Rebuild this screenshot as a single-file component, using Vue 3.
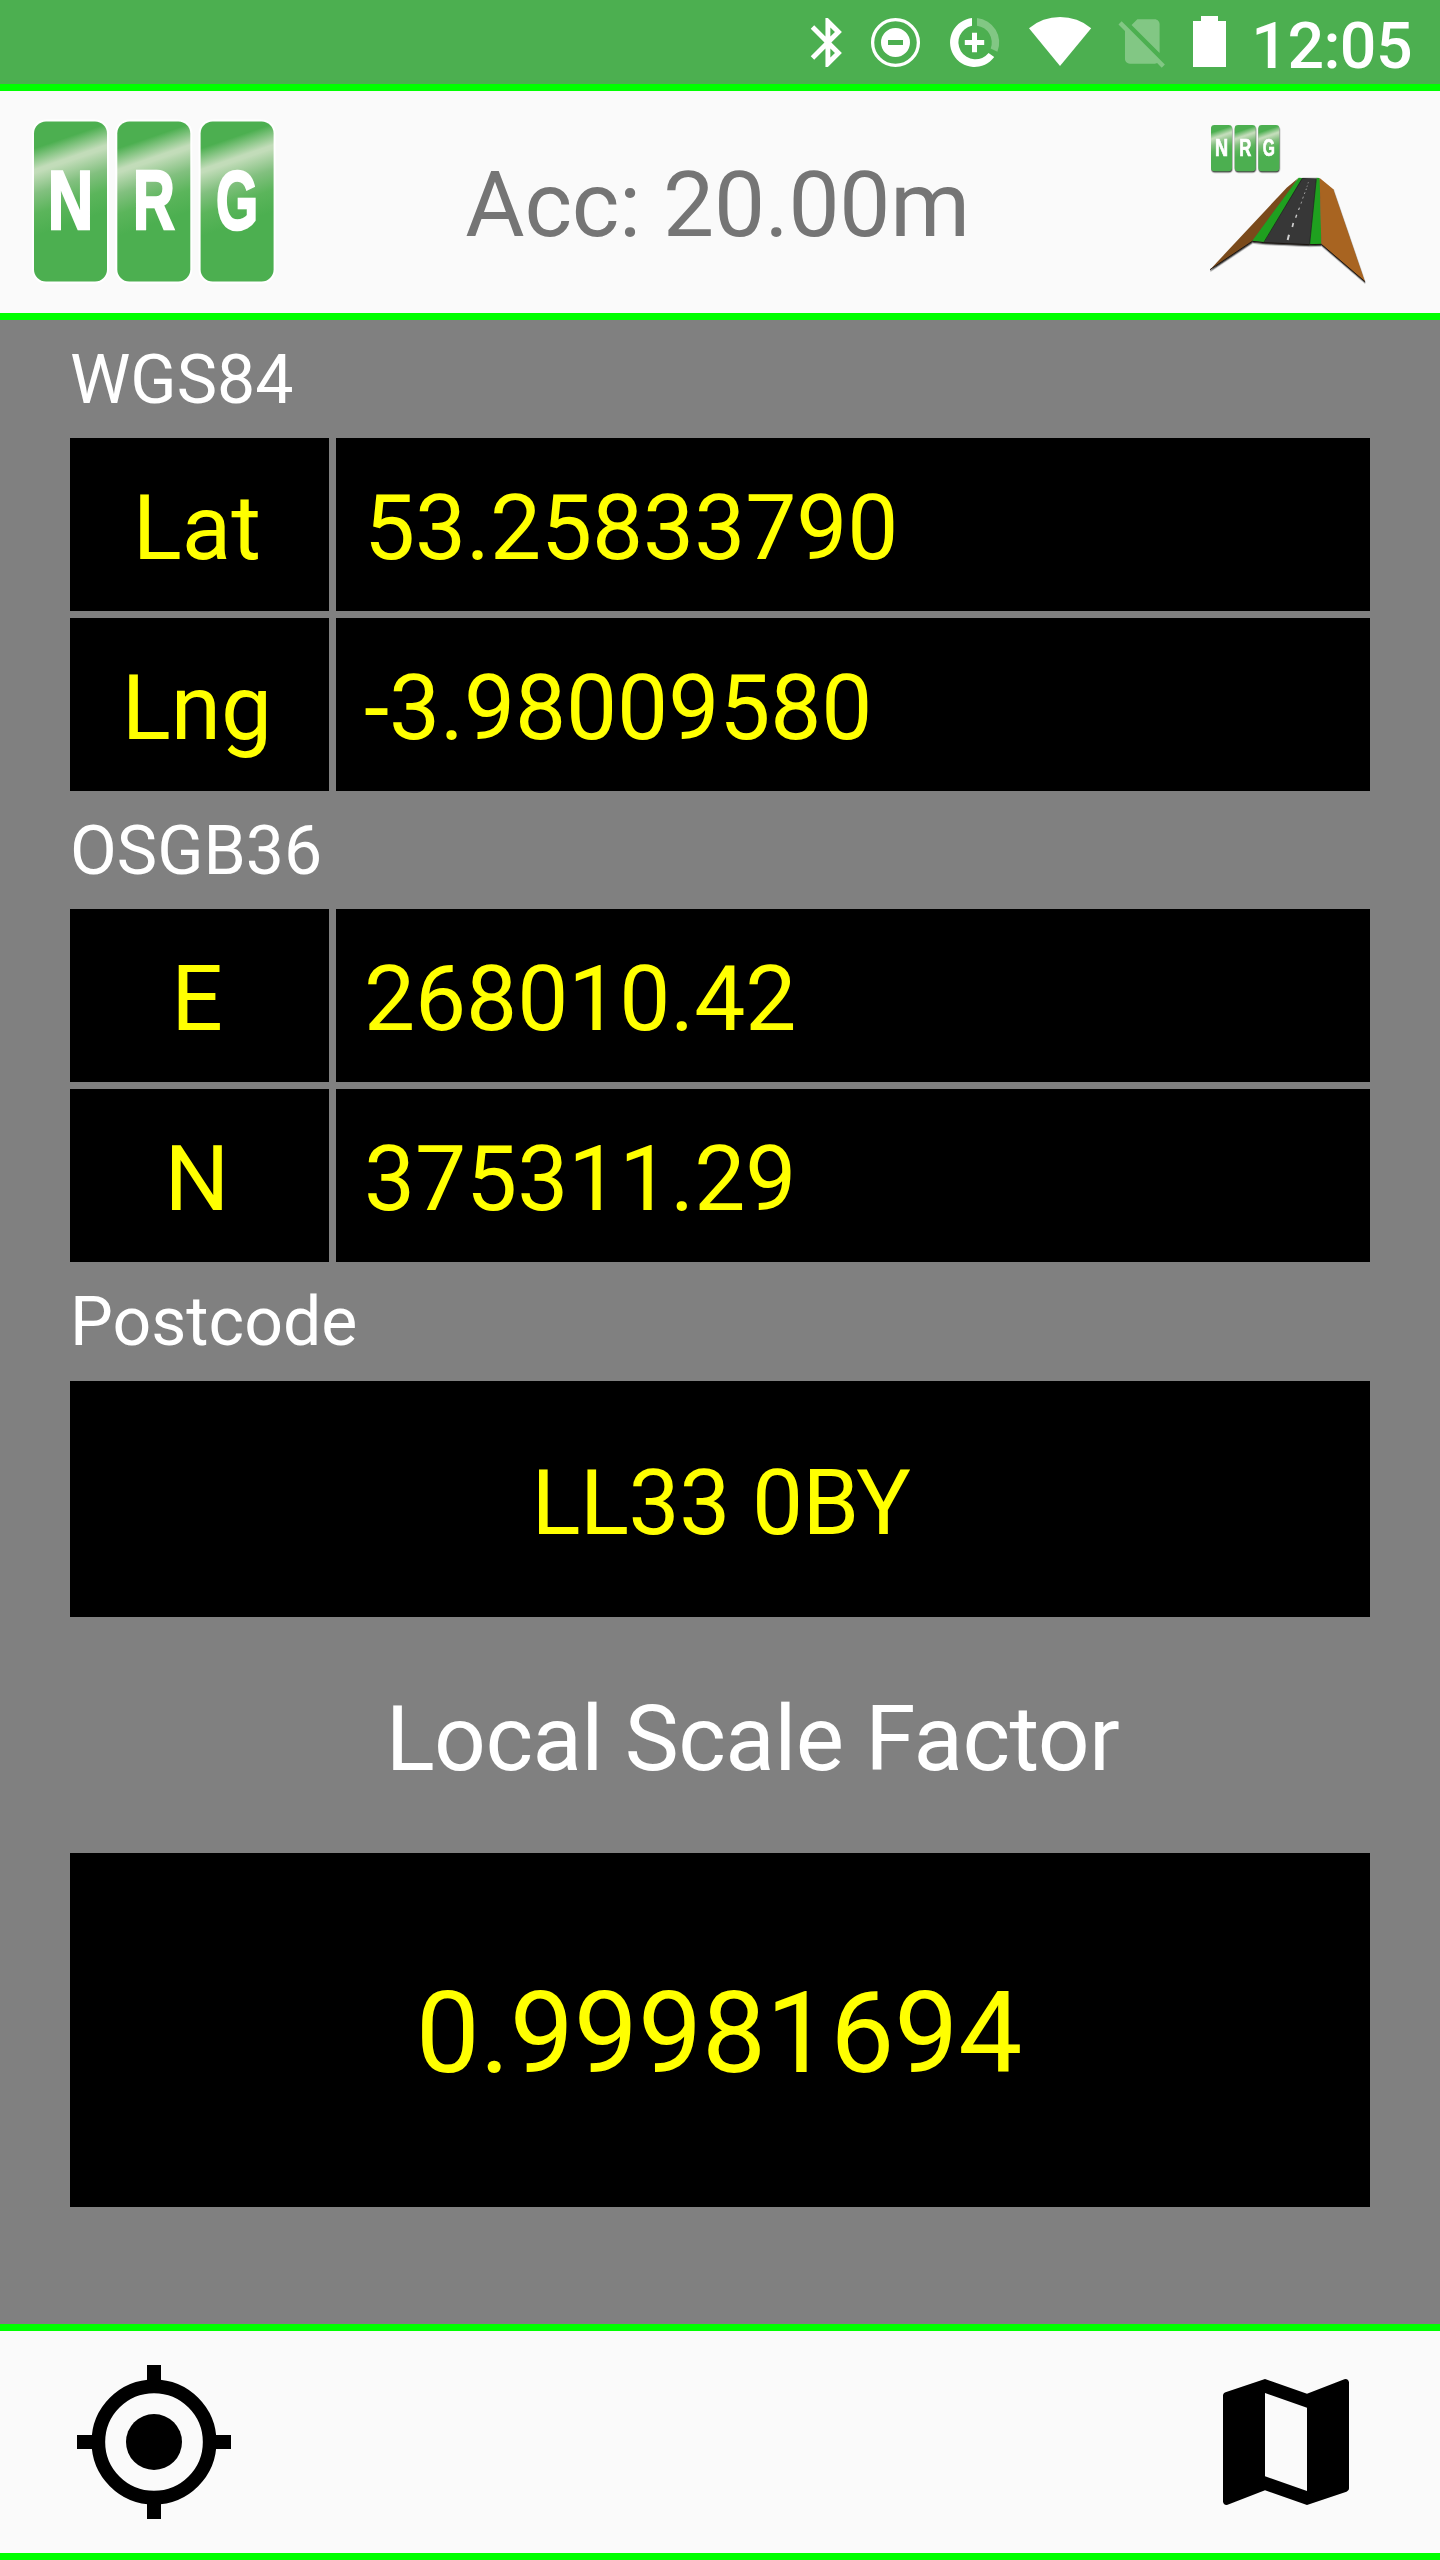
<script setup>
const systems = [
  { name: 'WGS84', rows: [['Lat', '53.25833790'], ['Lng', '-3.98009580']] },
  { name: 'OSGB36', rows: [['E', '268010.42'], ['N', '375311.29']] },
]
// each logo tile: letter and its horizontal condensing factor
const tiles = [
  { t: 'N', s: 0.75 },
  { t: 'R', s: 0.69 },
  { t: 'G', s: 0.645 },
]
</script>

<template>
  <div class="screen">
    <div class="status">
      <svg class="icons" width="440" height="84" viewBox="790 0 440 84" fill="#fff">
        <!-- bluetooth -->
        <path transform="translate(798.5 13.1) scale(2.45)" d="M17.71 7.71L12 2h-1v7.59L6.41 5 5 6.41 10.59 12 5 17.59 6.41 19 11 14.41V22h1l5.71-5.71-4.3-4.29 4.3-4.29zM13 5.83l1.88 1.88L13 9.59V5.83zm1.88 10.46L13 18.17v-3.76l1.88 1.88z" />
        <!-- do not disturb -->
        <circle cx="895.5" cy="42.5" r="22.9" fill="none" stroke="#fff" stroke-width="3.3" />
        <path fill-rule="evenodd" d="M895.5 28a14.5 14.5 0 1 1 0 29a14.5 14.5 0 1 1 0-29zM888 40v5h15v-5z" />
        <!-- data saver -->
        <g transform="translate(974.5 42.5)">
          <path d="M-2.5-24.4A24.5 24.5 0 1 0 19.7 14.6L14.1 10.6A17 17 0 1 1-2.5-16.8Z" />
          <path opacity=".3" d="M2.5-24.4A24.5 24.5 0 0 1 22.9 9.2L16.2 6A17 17 0 0 0 2.5-16.8Z" />
          <path d="M-2.5-9.7h5v7.2h7.2v5h-7.2v7.2h-5v-7.2h-7.2v-5h7.2z" />
        </g>
        <!-- wifi -->
        <path d="M1060 66L1029 28.2A48.6 48.6 0 0 1 1091.2 28.2Z" />
        <!-- no sim -->
        <path opacity=".3" transform="translate(1112.6 11.7) scale(2.475)" d="M18.99 5c0-1.1-.89-2-1.99-2h-7L7.66 5.34 19 16.68 18.99 5zM3.65 3.88L2.38 5.15 5 7.77V19c0 1.1.9 2 2 2h10.01c.35 0 .67-.1.96-.26l1.88 1.88 1.27-1.27L3.65 3.88z" />
        <!-- battery -->
        <path d="M1201 16h17v5h8v46h-33V21h8z" />
      </svg>
      <span class="clock">12:05</span>
    </div>

    <header class="bar header">
      <svg class="logo" width="260" height="222" viewBox="20 91 260 222">
        <defs>
          <linearGradient id="gloss" gradientUnits="userSpaceOnUse" x1="-7" y1="29.5" x2="20" y2="108.2">
            <stop offset="0" stop-color="#4caf50" />
            <stop offset=".24" stop-color="#c2dcb9" />
            <stop offset=".28" stop-color="#c2dcb9" />
            <stop offset=".52" stop-color="#82c07f" />
            <stop offset=".75" stop-color="#5bb55b" />
            <stop offset="1" stop-color="#4caf50" />
          </linearGradient>
        </defs>
        <g v-for="(tile, i) in tiles" :key="tile.t" :transform="`translate(${34 + i * 83.3} 121.5)`">
          <rect x="-2" y="-2" width="77" height="164" rx="14" fill="#fff" />
          <rect width="73" height="160" rx="12" fill="url(#gloss)" />
          <text class="letter" :transform="`translate(36.5 107.3) scale(${tile.s} 1)`" text-anchor="middle">{{ tile.t }}</text>
        </g>
      </svg>
      <div class="accuracy">Acc: 20.00m</div>
      <svg class="road" width="200" height="190" viewBox="0 0 600 570">
        <g class="shadow">
          <g v-for="(tile, i) in tiles" :key="tile.t" :transform="`translate(${63 + i * 71} 45) scale(.865)`">
            <rect width="73" height="160" rx="12" fill="url(#gloss)" />
            <text class="letter" :transform="`translate(36.5 107.3) scale(${tile.s} 1)`" text-anchor="middle">{{ tile.t }}</text>
          </g>
        </g>
        <g class="shadow">
          <path d="M326 203L290 233L60 479L187 393Z" fill="#7a4a1b" />
          <path d="M326 203L338 204L223 396L187 392Z" fill="#1fa01f" />
          <path d="M337 204L379 206L359 404L222 398Z" fill="#373737" />
          <path d="M379 206L379 203L389 204L394 402L359 402Z" fill="#1fa01f" />
          <path d="M389 204L430 238L525 515L394 402Z" fill="#a86421" />
          <path d="M337 205L222 396M379 206L359 402M337 205H379" fill="none" stroke="#1b1b1b" stroke-width="2" />
          <path d="M60 479L187 394L222 398L359 404L394 403L525 515" fill="none" stroke="#1c1510" stroke-width="3" />
          <g stroke="#d0d0d0" fill="none">
            <path d="M297 374L293 390" stroke-width="6" />
            <path d="M310 339L307 351" stroke-width="5" />
            <path d="M320 314L317 323" stroke-width="4" />
            <path d="M328 293L326 300" stroke-width="3" />
            <path d="M335 275L333 281M340 260L338 266M345 247L343 252M349 236L348 240M352 227L351 230M355 217L354 220" stroke-width="2" />
          </g>
        </g>
      </svg>
    </header>

    <main class="content">
      <template v-for="s in systems" :key="s.name">
        <h2 class="label">{{ s.name }}</h2>
        <div class="rows">
          <div v-for="r in s.rows" :key="r[0]" class="row">
            <div class="cell key">{{ r[0] }}</div>
            <div class="cell value">{{ r[1] }}</div>
          </div>
        </div>
      </template>
      <h2 class="label last">Postcode</h2>
      <div class="cell postcode">LL33 0BY</div>
      <h2 class="factor-title">Local Scale Factor</h2>
      <div class="cell factor">0.99981694</div>
    </main>

    <footer class="bar footer">
      <svg width="168" height="168" viewBox="0 0 24 24">
        <path fill="none" stroke="#000" stroke-width="2" d="M12 1v3M12 20v3M1 12h3M20 12h3" />
        <circle cx="12" cy="12" r="7.95" fill="none" stroke="#000" stroke-width="1.95" />
        <circle cx="12" cy="12" r="4" />
      </svg>
      <svg width="168" height="168" viewBox="0 0 24 24">
        <path d="M20.5 3l-.16.03L15 5.1 9 3 3.36 4.9c-.21.07-.36.25-.36.48V20.5c0 .28.22.5.5.5l.16-.03L9 18.9l6 2.1 5.64-1.9c.21-.07.36-.25.36-.48V3.5c0-.28-.22-.5-.5-.5zM15 19l-6-2.11V5l6 2.11V19z" />
      </svg>
    </footer>
  </div>
</template>

<style scoped>
.screen {
  width: 1440px;
  height: 2560px;
  display: flex;
  flex-direction: column;
  overflow: hidden;
  background: #808080;
  font-family: Roboto, sans-serif;
}
.screen * { box-sizing: border-box; }
svg { display: block; flex: none; }
.status {
  height: 84px;
  flex: none;
  display: flex;
  align-items: center;
  justify-content: flex-end;
  background: #4caf50;
  color: #fff;
}
.clock {
  width: 210px;
  padding: 8px 28px 0 0;
  text-align: right;
  font-size: 64.5px;
  letter-spacing: -0.6px;
  line-height: 76px;
  font-weight: 500;
}
.bar {
  height: 236px;
  flex: none;
  display: flex;
  align-items: center;
  justify-content: space-between;
  background: #fafafa;
  border-top: 7px solid #0f0;
  border-bottom: 7px solid #0f0;
}
.header { padding: 0 50px 0 20px; }
.road { margin-top: 6px; }
.accuracy {
  flex: 1;
  padding: 7px 35px 0 0;
  text-align: center;
  color: #757575;
  font-size: 91px;
  letter-spacing: -0.3px;
  line-height: 107px;
}
.letter {
  font: bold 84px "Liberation Sans", Arial, sans-serif;
  fill: #fff;
  stroke: #fff;
  stroke-width: 2.6px;
}
.shadow { filter: drop-shadow(1px 4px 2px rgba(0, 0, 0, .7)); }
.content {
  flex: 1;
  padding: 0 70px;
  display: flex;
  flex-direction: column;
}
h2 { margin: 0; font-weight: 400; color: #fff; }
.label {
  height: 118px;
  font-size: 68px;
  line-height: 120px;
}
.label.last { height: 119px; line-height: 121px; }
.rows { display: flex; flex-direction: column; gap: 7px; }
.row { display: flex; gap: 7px; height: 173px; }
.cell {
  display: flex;
  align-items: center;
  justify-content: center;
  padding-top: 7px;
  background: #000;
  color: #ff0;
  font-size: 91px;
  line-height: 107px;
}
.key { width: 259px; padding-right: 5px; }
.value { flex: 1; justify-content: flex-start; padding-left: 28px; letter-spacing: -0.1px; }
.postcode { height: 236px; padding: 9px 0 0 2px; letter-spacing: -0.5px; }
.factor-title {
  height: 236px;
  padding: 4px 0 0 65px;
  text-align: center;
  font-size: 91px;
  letter-spacing: -0.6px;
  line-height: 236px;
}
.factor { height: 354px; padding: 5px 2px 0 0; font-size: 114px; line-height: 134px; }
.footer { padding: 0 70px; }
</style>

<style>
body { margin: 0; }
</style>
